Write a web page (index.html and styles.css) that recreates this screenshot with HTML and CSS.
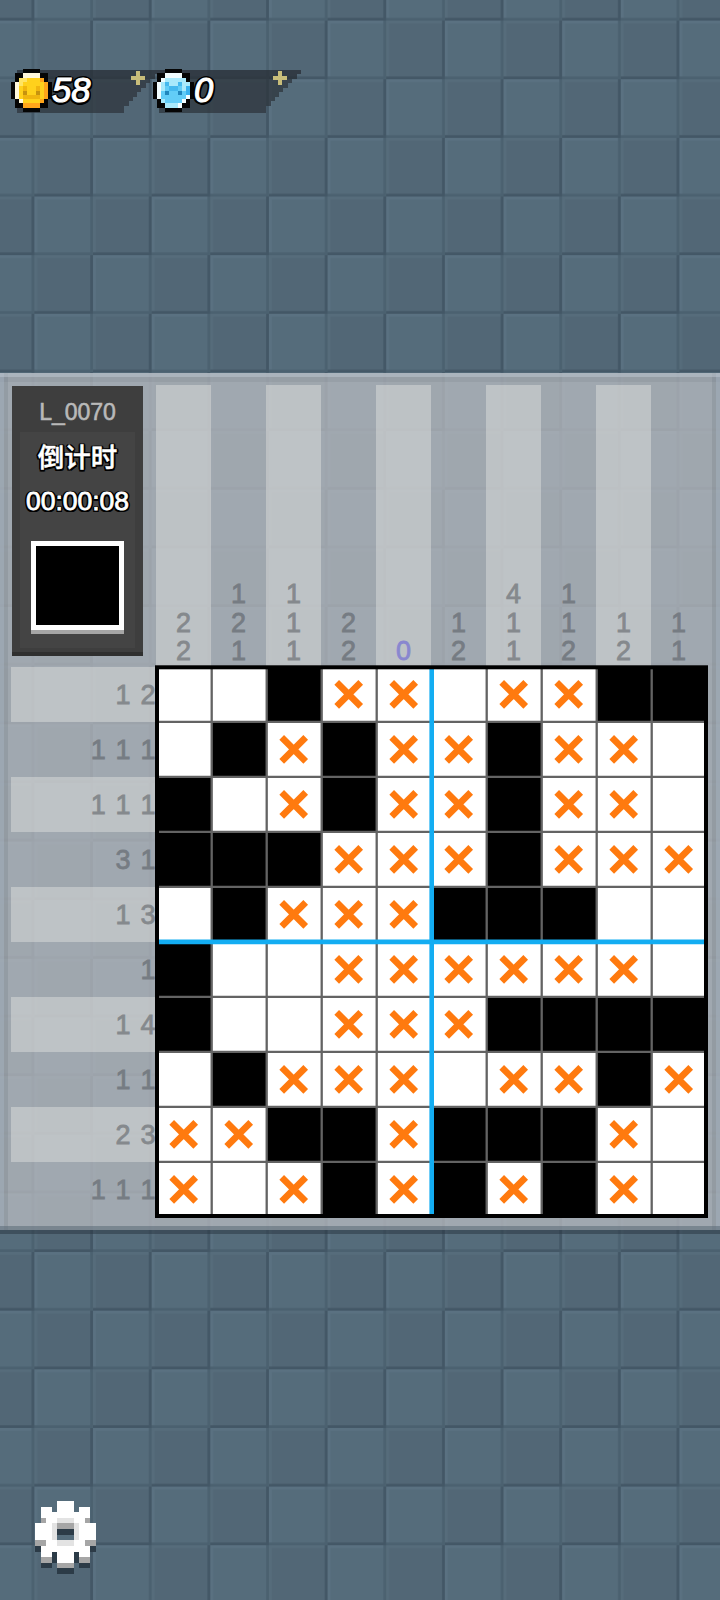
FILE: index.html
```html
<!DOCTYPE html>
<html lang="zh">
<head>
<meta charset="utf-8">
<title>L_0070</title>
<link rel="stylesheet" href="styles.css">
</head>
<body>
<svg class="wall" width="720" height="1600" aria-hidden="true">
  <defs>
    <g id="light-tile">
      <rect width="58.64" height="58.64" fill="#556c7b"/>
      <path d="M0 1.4H58.6M1.4 0V58.6" stroke="#5a7181" stroke-width="2.8"/>
      <path d="M0 57.2H58.6M57.2 0V58.6" stroke="#4b6170" stroke-width="2.8"/>
    </g>
    <g id="dark-tile">
      <rect width="58.64" height="58.64" fill="#526776"/>
      <path d="M0 1.4H58.6M1.4 0V58.6" stroke="#566c7b" stroke-width="2.8"/>
      <path d="M0 57.2H58.6M57.2 0V58.6" stroke="#435766" stroke-width="2.8"/>
    </g>
    <pattern id="tiles" x="34.4" y="20.6" width="117.28" height="117.28" patternUnits="userSpaceOnUse">
      <use href="#dark-tile"/>
      <use href="#light-tile" x="58.64"/>
      <use href="#light-tile" y="58.64"/>
      <use href="#dark-tile" x="58.64" y="58.64"/>
    </pattern>
  </defs>
  <rect width="720" height="1600" fill="url(#tiles)"/>
</svg>
<main class="screen">
  <header class="wallet">
    <div class="purse">
      <svg class="purse-bar" width="142" height="43" shape-rendering="crispEdges"><path d="M0 0H142V4H138V9H133V13H129V18H124V22H120V27H116V31H112V36H107V43H0Z"/><path d="M0 0H142V4H138V9H0Z"/></svg>
      <svg class="coin" data-sprite="gold" width="41" height="43"></svg>
      <span class="amount">58</span>
      <svg class="plus" width="14" height="14"><path d="M5 0h4v5h5v4h-5v5h-4v-5h-5v-4h5z"/></svg>
    </div>
    <div class="purse">
      <svg class="purse-bar" width="142" height="43" shape-rendering="crispEdges"><path d="M0 0H142V4H138V9H133V13H129V18H124V22H120V27H116V31H112V36H107V43H0Z"/><path d="M0 0H142V4H138V9H0Z"/></svg>
      <svg class="coin" data-sprite="gem" width="41" height="43"></svg>
      <span class="amount">0</span>
      <svg class="plus" width="14" height="14"><path d="M5 0h4v5h5v4h-5v5h-4v-5h-5v-4h5z"/></svg>
    </div>
  </header>
  <section class="panel">
    <div class="side">
      <div class="info">
        <div class="level">L_0070</div>
        <div class="label">倒计时</div>
        <div class="clock">00:00:08</div>
        <div class="thumb"></div>
      </div>
    </div>
    <div class="col-hints" id="colHints"></div>
    <div class="row-hints" id="rowHints"></div>
    <div class="board" id="board"></div>
  </section>
  <footer class="tools">
    <svg class="gear" data-sprite="gear" width="61" height="73"></svg>
  </footer>
</main>
<script src="script.js"></script>
</body>
</html>
```

FILE: styles.css
```css
body { margin: 0; background: #556c7b; font-family: "Liberation Sans", "Noto Sans CJK SC", sans-serif; }
.wall { position: absolute; left: 0; top: 0; }
.screen { position: relative; width: 720px; height: 1600px; overflow: hidden; display: flex; flex-direction: column; }

.wallet { box-sizing: border-box; height: 373px; padding: 69px 0 0 11px; display: flex; }
.purse { position: relative; width: 142px; height: 43px; display: flex; align-items: center; }
.purse-bar { position: absolute; left: 6px; top: 1px; fill: rgba(44, 51, 58, .72); }
.purse-bar path + path { fill: rgba(30, 36, 42, .18); }
.coin { position: relative; flex: none; }
.amount { position: relative; font: italic 34.5px/43px "Liberation Sans", sans-serif; color: #fff; }
.amount, .clock, .label { text-shadow: -2px -1px #000, 2px -1px #000, -2px 2px #000, 2px 2px #000, 0 -2px #000, 0 3px #000, -2px 0 #000, 2px 0 #000; }
.amount { -webkit-text-stroke: 1.1px #fff; }
.plus { position: absolute; left: 120px; top: 2px; fill: #c8bd7a; }

.panel { box-sizing: border-box; width: 720px; height: 861px; padding: 12px 0 0 11px; display: grid; grid-template: 282px 550px / 145px 550px; flex: none;
  background: rgba(185, 188, 193, .75);
  border-bottom: 4px solid rgba(40, 52, 64, .5);
  background-clip: padding-box;
  box-shadow: inset 0 -4px rgba(90, 105, 118, .55), inset 0 4px rgba(190, 200, 210, .5), inset 4px 0 rgba(175, 190, 205, .35), inset -4px 0 rgba(175, 190, 205, .35), inset 0 9px rgba(120, 128, 136, .22), inset 8px 0 rgba(120, 128, 136, .3), inset -8px 0 rgba(120, 128, 136, .3); }
.info { box-sizing: border-box; width: 131px; height: 270px; margin: 1px 0 0 1px; padding-top: 10px; background: #444; border: 8px solid #3e3e3e; border-top-width: 0; box-shadow: inset 0 46px #3e3e3e; position: relative; display: flex; flex-direction: column; align-items: center; color: #fff; }
.info::after { content: ""; position: absolute; left: -8px; right: -8px; bottom: -8px; height: 4px; background: #2f2f2f; }
.level { font-size: 23px; line-height: 32px; color: #b9b9b9; -webkit-text-stroke: .6px #b9b9b9; }
.label { margin-top: 8px; font: 500 26.5px/40px "Noto Sans CJK SC", sans-serif; -webkit-text-stroke: .5px #fff; }
.clock { margin-top: 5px; font-size: 26.5px; line-height: 40px; -webkit-text-stroke: .8px #fff; }
.label, .clock { text-shadow: -1.5px -1.5px #000, 1.5px -1.5px #000, -1.5px 1.5px #000, 1.5px 2px #000, 0 2px #000, 2px 0 #000, -2px 0 #000; }
.thumb { box-sizing: border-box; width: 93px; height: 89px; margin-top: 20px; background: #000; border: 5px solid #fff; box-shadow: 0 4px #a6a6a6; }

.col-hints { display: grid; grid-template-columns: repeat(10, 55px); }
.col-hint { display: flex; flex-direction: column; justify-content: flex-end; align-items: center; font-size: 27px; line-height: 28.7px; padding-bottom: 1px; color: #767c83; -webkit-text-stroke: .8px currentColor; }
.row-hints { display: grid; grid-template-rows: repeat(10, 55px); }
.row-hint { display: flex; align-items: center; justify-content: flex-end; font-size: 27px; word-spacing: 2.4px; padding: 2px .5px 0 0; box-sizing: border-box; white-space: nowrap; color: #767c83; -webkit-text-stroke: .8px currentColor; }
.striped { background: rgba(220, 221, 219, .5); color: #85898d; }
.zero { color: #8987cf; }

.board { position: relative; width: 550px; height: 550px; display: grid; grid-template: repeat(10, 55px) / repeat(10, 55px); background: #fff; }
.filled { background: #000; }
.crossed path { stroke: #ff7a0f; stroke-width: 6.6; fill: none; }
.cell svg { display: block; }
.rules { position: absolute; left: -2px; top: -2px; fill: none; }
.rules .thin { stroke: #636363; stroke-width: 2.3; }
.rules .thick { stroke: #13adf2; stroke-width: 4.6; }
.rules .frame { stroke: #000; stroke-width: 4; }

.tools { padding: 267px 0 0 35px; }
.gear { display: block; }
```

FILE: script.js
```js
const rows = [
  '..#xx.xx##',
  '.#x#xx#xx.',
  '#.x#xx#xx.',
  '###xxx#xxx',
  '.#xxx###..',
  '#..xxxxxx.',
  '#..xxx####',
  '.#xxx.xx#x',
  'xx##x###x.',
  'x.x#x#x#x.'
];
const colClues = ['2 2', '1 2 1', '1 1 1', '2 2', '0', '1 2', '4 1 1', '1 1 2', '1 2', '1 1'];
const rowClues = ['1 2', '1 1 1', '1 1 1', '3 1', '1 3', '1', '1 4', '1 1', '2 3', '1 1 1'];

const cross = '<svg width="55" height="55"><path d="M15.7 15.3L39.7 39.3M39.7 15.3L15.7 39.3"/></svg>';
const cellHtml = {
  '.': '<div class="cell"></div>',
  '#': '<div class="cell filled"></div>',
  'x': '<div class="cell crossed">' + cross + '</div>'
};

document.getElementById('colHints').innerHTML = colClues.map((clue, i) =>
  `<div class="col-hint${i % 2 ? '' : ' striped'}${clue === '0' ? ' zero' : ''}">` +
  clue.split(' ').map(n => `<span>${n}</span>`).join('') + '</div>').join('');

document.getElementById('rowHints').innerHTML = rowClues.map((clue, i) =>
  `<div class="row-hint${i % 2 ? '' : ' striped'}">${clue}</div>`).join('');

// Thin rules separate cells; the thick ones split the board into quarters.
let thin = '';
for (let i = 1; i < 10; i++) {
  const x = 2.7 + i * 55, y = 1.9 + i * 55;
  thin += `M${x} 4V549M4 ${y}H551`;
}
document.getElementById('board').innerHTML =
  rows.join('').split('').map(c => cellHtml[c]).join('') +
  `<svg class="rules" width="555" height="554"><path class="thin" d="${thin}"/>` +
  '<path class="thick" d="M277.7 4V549M4 276.9H551"/>' +
  '<rect class="frame" x="3" y="2.3" width="549" height="548.7"/></svg>';

const sprites = {
  gold: {
    colors: { B: '#050505', W: '#fff8dc', L: '#ffe463', Y: '#ffd11c', O: '#ffa51a', E: '#c6930f', D: '#f0b50f' },
    map: [
      '...BBBB...',
      '.BBWWWWBB.',
      '.BLLYYYOB.',
      'BWLYYYYYOB',
      'BWYDYYDYOB',
      'BWYEYYEYOB',
      'BWYDDDDYOB',
      '.BWYYYYOB.',
      '.BBOOOOBB.',
      '...BBBB...'
    ]
  },
  gem: {
    colors: { B: '#050505', W: '#f2fdff', L: '#a9e9fb', Y: '#62cdf7', O: '#39b2ee', E: '#2187bd', D: '#45b9ee' },
    map: [
      '...BBBB...',
      '.BBWWWWBB.',
      '.BWLLLLLB.',
      'BWLDLLDLLB',
      'BWLYDDYLOB',
      'BWYEYYEYOB',
      'BWYYYYYYWB',
      '.BLYYYYWB.',
      '.BBLLLWBB.',
      '...BBBB...'
    ]
  },
  gear: {
    colors: { W: '#ffffff', L: '#e3e3e3', G: '#a6a6a6', D: '#2c3b47' },
    map: [
      '....WWW....',
      '.WW.WWW.WW.',
      '.WWWWWWWWW.',
      '.GWWLLLWWG.',
      'WWWLGGGLWWW',
      'WWWLDDDLWWW',
      'WWWL...LWWW',
      'GGWWLLLWWGG',
      'DWWWWWWWWWD',
      '.WWDWWWDWW.',
      '.GGDWWWDGG.',
      '.DD.GGG.DD.',
      '....DDD....'
    ]
  }
};
document.querySelectorAll('[data-sprite]').forEach(svg => {
  const { colors, map } = sprites[svg.dataset.sprite];
  svg.setAttribute('viewBox', `0 0 ${map[0].length} ${map.length}`);
  svg.setAttribute('preserveAspectRatio', 'none');
  svg.setAttribute('shape-rendering', 'crispEdges');
  svg.innerHTML = map.map((line, y) => [...line].map((c, x) =>
    colors[c] ? `<rect x="${x}" y="${y}" width="1" height="1" fill="${colors[c]}"/>` : '').join('')).join('');
});
```
